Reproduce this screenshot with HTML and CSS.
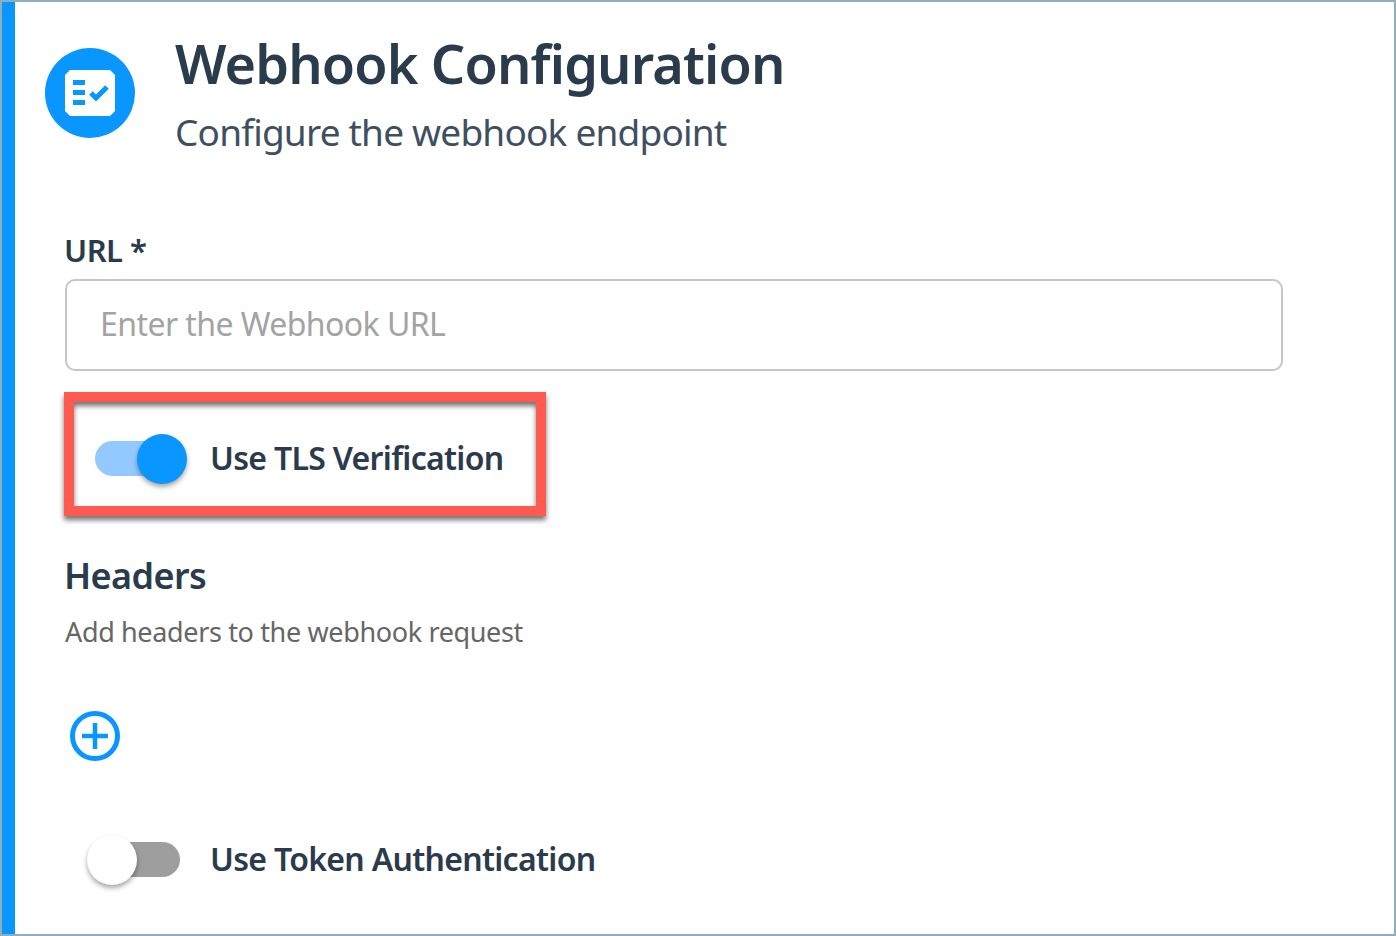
FILE: index.html
```html
<!DOCTYPE html>
<html lang="en">

<head>
    <meta charset="UTF-8">
    <title>Webhook Configuration</title>
    <link rel="stylesheet" href="styles.css">
</head>

<body>
    <div class="frame">
        <div class="panel">
            <div class="panel-header">
                <div class="header-icon">
                    <svg width="50" height="46" viewBox="0 0 50 46">
                        <path d="M5 0H45L50 5V41L45 46H5L0 41V5Z" fill="#fff" />
                        <path d="M8 10H20V15H8ZM8 20H20V25H8ZM8 30H20V35H8Z" fill="#0a96ff" />
                        <path d="M26 23L31 28L42 17" fill="none" stroke="#0a96ff" stroke-width="5" />
                    </svg>
                </div>
                <div>
                    <h1 class="title">Webhook Configuration</h1>
                    <p class="subtitle">Configure the webhook endpoint</p>
                </div>
            </div>

            <div class="form">
                <label class="field-label">URL *</label>
                <div class="text-input">Enter the Webhook URL</div>

                <div class="highlight">
                    <div class="toggle-row">
                        <span class="switch on"><span class="knob"></span></span>
                        <span class="toggle-label">Use TLS Verification</span>
                    </div>
                </div>

                <h2 class="section-title">Headers</h2>
                <p class="section-text">Add headers to the webhook request</p>

                <svg class="add-btn" width="50" height="50" viewBox="0 0 50 50">
                    <circle cx="25" cy="25" r="22.5" fill="none" stroke="#0a96ff" stroke-width="5" />
                    <path d="M12 25H38M25 12V38" fill="none" stroke="#0a96ff" stroke-width="4.5" />
                </svg>

                <div class="toggle-row token-row">
                    <span class="switch"><span class="knob"></span></span>
                    <span class="toggle-label">Use Token Authentication</span>
                </div>
            </div>
        </div>
    </div>
</body>

</html>
```

FILE: styles.css
```css
* {
    box-sizing: border-box;
}

body {
    margin: 0;
    font-family: "Noto Sans", Arial, sans-serif;
    background: #fff;
    color: #2a3b4c;
    overflow: hidden;
}

.frame {
    height: 936px;
    border: 2px solid #8fadbb;
    overflow: hidden;
}

.panel {
    height: 100%;
    border-left: 13px solid #0a96ff;
    padding-left: 30px;
}

.panel-header {
    display: flex;
    gap: 40px;
    height: 190px;
    padding-top: 23px;
}

.header-icon {
    width: 90px;
    height: 90px;
    margin-top: 23px;
    border-radius: 50%;
    background: #0a96ff;
    display: flex;
    align-items: center;
    justify-content: center;
}

.title {
    margin: 0;
    font-size: 54px;
    line-height: 76px;
    font-weight: 600;
    letter-spacing: -0.85px;
}

.subtitle {
    margin: 4px 0 0;
    font-size: 37px;
    line-height: 54px;
    color: #3e5060;
    letter-spacing: -0.8px;
}

.form {
    padding-left: 20px;
    width: 1238px;
}

.field-label {
    display: block;
    font-size: 31px;
    line-height: 40px;
    font-weight: 600;
    letter-spacing: -0.5px;
    margin: 38px 0 9px -1px;
}

.text-input {
    height: 92px;
    border: 2px solid #c6c6c6;
    border-radius: 10px;
    padding-left: 33px;
    font-size: 32px;
    line-height: 86px;
    color: #a3a3a3;
    letter-spacing: -0.57px;
}

.highlight {
    width: 482px;
    height: 124px;
    margin-top: 21px;
    margin-left: -1px;
    border: 10px solid #ff5a4f;
    box-shadow: 0 4px 5px rgba(0, 0, 0, 0.55), inset 0 4px 5px rgba(0, 0, 0, 0.55);
    padding: 8px 21px 0;
    display: flex;
    align-items: center;
}

.toggle-row {
    display: flex;
    align-items: center;
    gap: 30px;
}

.switch {
    display: block;
    position: relative;
    width: 85px;
    height: 35px;
    border-radius: 18px;
    background: #9e9e9e;
}

.switch.on {
    background: #94c9ff;
}

.knob {
    position: absolute;
    top: -7px;
    left: -8px;
    width: 50px;
    height: 50px;
    border-radius: 50%;
    background: #fff;
    box-shadow: 0 3px 5px rgba(0, 0, 0, 0.35);
}

.switch.on .knob {
    left: 42px;
    background: #0a96ff;
}

.toggle-label {
    font-size: 32px;
    line-height: 40px;
    font-weight: 600;
    letter-spacing: -0.7px;
}

.section-title {
    margin: 33px 0 0 -1px;
    font-size: 36px;
    line-height: 54px;
    font-weight: 600;
    letter-spacing: -0.6px;
}

.section-text {
    margin: 9px 0 0;
    font-size: 27px;
    line-height: 40px;
    color: #666;
    letter-spacing: -0.36px;
}

.add-btn {
    display: block;
    margin: 59px 0 0 5px;
}

.token-row {
    margin: 78px 0 0 30px;
}
```
